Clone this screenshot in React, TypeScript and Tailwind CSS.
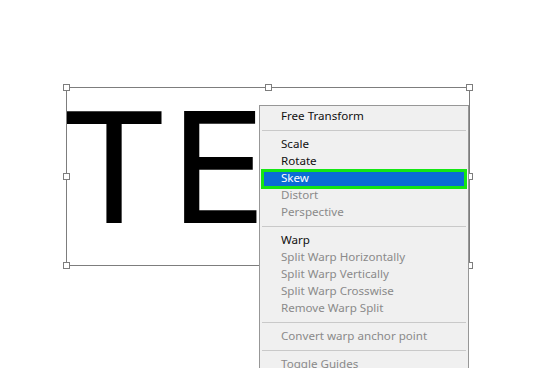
import React from "react";

const handles = [
  [63, 84], [265, 84], [466, 84],
  [63, 173], [466, 173],
  [63, 262], [265, 262], [466, 262],
];

type Item = { label: string; disabled?: boolean; active?: boolean } | "sep";

const items: Item[] = [
  { label: "Free Transform" },
  "sep",
  { label: "Scale" },
  { label: "Rotate" },
  { label: "Skew", active: true },
  { label: "Distort", disabled: true },
  { label: "Perspective", disabled: true },
  "sep",
  { label: "Warp" },
  { label: "Split Warp Horizontally", disabled: true },
  { label: "Split Warp Vertically", disabled: true },
  { label: "Split Warp Crosswise", disabled: true },
  { label: "Remove Warp Split", disabled: true },
  "sep",
  { label: "Convert warp anchor point", disabled: true },
  "sep",
  { label: "Toggle Guides", disabled: true },
];

export default function App() {
  return (
    <div className="relative w-[549px] h-[368px] bg-white overflow-hidden">
      {/* Transform box */}
      <div className="absolute left-[66px] top-[87px] w-[404px] h-[179px] border border-[#7d7d7d] overflow-hidden">
        <div
          className="absolute left-[0px] top-[5px] text-[154px] leading-none text-black tracking-[8px] whitespace-nowrap"
          style={{ fontFamily: '"DejaVu Sans", sans-serif' }}
        >
          TE
        </div>
      </div>

      {handles.map(([x, y], i) => (
        <div
          key={i}
          className="absolute w-[7px] h-[7px] bg-white border border-[#7d7d7d]"
          style={{ left: x, top: y }}
        />
      ))}

      {/* Context menu */}
      <div
        className="absolute left-[259px] top-[105px] w-[210px] bg-[#f0f0f0] border border-[#979797] pt-[2px] text-[11.6px]"
        style={{ fontFamily: '"Noto Sans", sans-serif' }}
      >
        {items.map((it, i) =>
          it === "sep" ? (
            <div key={i} className="mx-[2px] my-[5px] h-px bg-[#c9c9c9]" />
          ) : (
            <div
              key={i}
              className={
                "relative h-[17px] flex items-center pl-[21px] pb-[2px] whitespace-nowrap " +
                (it.disabled ? "text-[#8a8a8a]" : "text-[#111]")
              }
            >
              {it.active && (
                <div className="absolute left-[1px] right-[1px] top-[-1px] bottom-[-2px] bg-[#0a6cd6] border-[3px] border-[#14e614]" />
              )}
              <span className={"relative " + (it.active ? "text-white" : "")}>{it.label}</span>
            </div>
          )
        )}
      </div>
    </div>
  );
}
